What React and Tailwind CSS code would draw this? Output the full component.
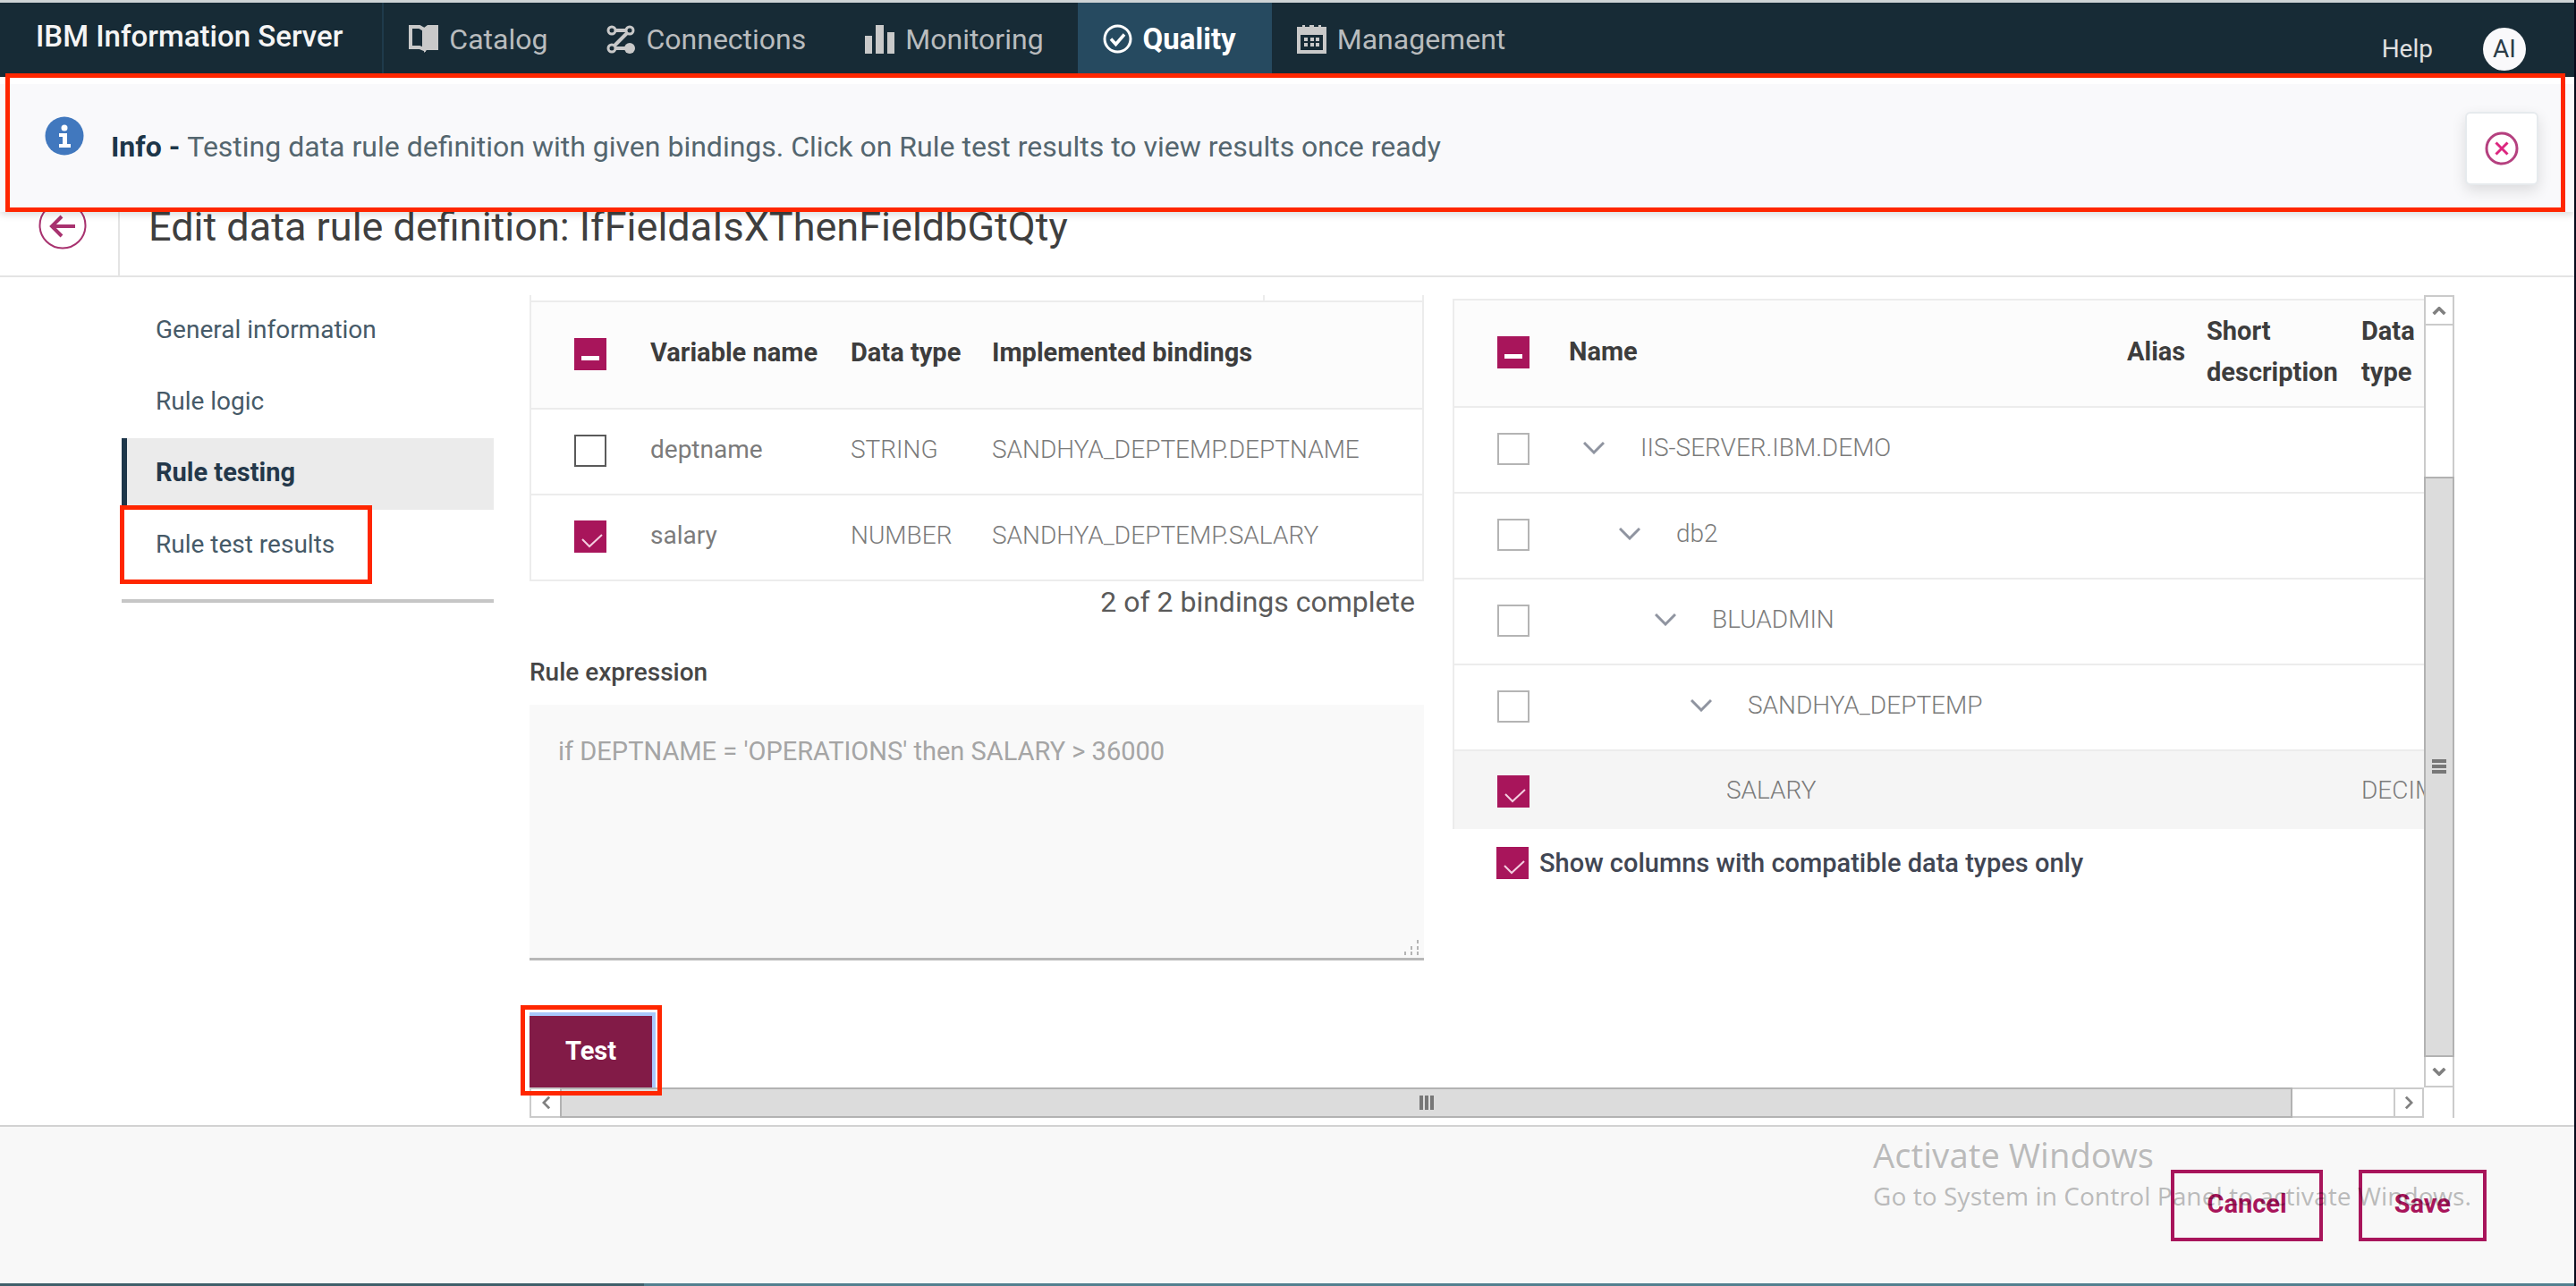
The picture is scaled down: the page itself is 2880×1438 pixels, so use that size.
import React from "react";

function CatalogIcon() {
  return (
    <svg viewBox="0 0 33 31" className="h-[31px] w-[33px]" fill="none" aria-hidden="true">
      <path d="M2 2h10l5 3v22l-5-2H2z" stroke="#c9c9c9" strokeWidth="4" />
      <path d="M17 3l4-3h12v28H20l-3 3z" fill="#c9c9c9" />
    </svg>
  );
}

function ConnectionsIcon() {
  return (
    <svg viewBox="0 0 32 32" className="h-8 w-8" fill="none" stroke="#c9c9c9" aria-hidden="true">
      <circle cx="6" cy="6" r="4" strokeWidth="3" />
      <circle cx="26" cy="6" r="4" strokeWidth="3" />
      <circle cx="6" cy="26" r="4" strokeWidth="3" />
      <circle cx="26" cy="26" r="6" fill="#c9c9c9" stroke="none" />
      <path d="M10 6h12M23 9L9 23M10 26h12" strokeWidth="4" />
    </svg>
  );
}

function MonitoringIcon() {
  return (
    <svg viewBox="0 0 33 32" className="h-8 w-[33px]" fill="#c9c9c9" aria-hidden="true">
      <path d="M0 12h8v20H0zM12 0h9v32h-9zM25 8h8v24h-8z" />
    </svg>
  );
}

function QualityIcon() {
  return (
    <svg viewBox="0 0 33 33" className="h-[33px] w-[33px]" fill="none" stroke="#ffffff" aria-hidden="true">
      <circle cx="16.500" cy="16.500" r="14.500" strokeWidth="3" />
      <path d="M9 16.500l5.500 6L24 11.500" strokeWidth="3.500" />
    </svg>
  );
}

function ManagementIcon() {
  return (
    <svg viewBox="0 0 33 32" className="h-8 w-[33px]" aria-hidden="true">
      <path
        fill="#c9c9c9"
        fillRule="evenodd"
        d="M0 2h6V0h3v2h5V0h5v2h5V0h3v2h6v30H0zM4 11v17h25V11z"
      />
      <path
        fill="#c9c9c9"
        d="M8 14h4v4H8zM15 14h4v4h-4zM21 14h4v4h-4zM8 20h4v4H8zM15 20h4v4h-4zM21 20h4v4h-4z"
      />
    </svg>
  );
}

function InfoIcon() {
  return (
    <svg viewBox="0 0 44 44" className="h-11 w-11 shrink-0" aria-hidden="true">
      <circle cx="22" cy="22" r="21.500" fill="#4178be" />
      <circle cx="22" cy="13" r="3.500" fill="#ffffff" />
      <path d="M16 19h9v12h4v4H16v-4h4v-8h-4z" fill="#ffffff" />
    </svg>
  );
}

function Chevron({ className, d, box = "0 0 24 14" }) {
  return (
    <svg viewBox={box} className={className} fill="none" stroke="currentColor" aria-hidden="true">
      <path d={d} />
    </svg>
  );
}

function Checkbox({ id, label, state = "off", tone = "light" }) {
  const on = state !== "off";
  return (
    <span className="relative block h-9 w-9 shrink-0">
      <input
        type="checkbox"
        id={id}
        aria-label={label}
        defaultChecked={on}
        className={
          on
            ? "block h-9 w-9 appearance-none bg-[#a8155b]"
            : tone === "dark"
              ? "block h-9 w-9 appearance-none border-2 border-[#5a5a5a] bg-white"
              : "block h-9 w-9 appearance-none border-2 border-[#b4b4b4] bg-white"
        }
      />
      {on && (
        <svg viewBox="0 0 36 36" className="pointer-events-none absolute inset-0" fill="none" aria-hidden="true">
          {state === "mixed" ? (
            <path d="M8 22.500h20" stroke="#ffffff" strokeWidth="5" />
          ) : (
            <path d="M9 21l8 8 14-13" stroke="#f3cfe0" strokeWidth="2" />
          )}
        </svg>
      )}
    </span>
  );
}

const navItems = [
  { label: "Catalog", icon: <CatalogIcon /> },
  { label: "Connections", icon: <ConnectionsIcon /> },
  { label: "Monitoring", icon: <MonitoringIcon /> },
  { label: "Quality", icon: <QualityIcon />, active: true },
  { label: "Management", icon: <ManagementIcon /> },
];

function TopBar() {
  return (
    <header className="flex h-[86px] items-stretch border-t-[3px] border-[#cfd4d6] bg-[#172b36]">
      <div className="flex items-center border-r-2 border-[#1f3a4b] pr-11 pb-2 pl-10 text-[33px] font-medium text-[#f5f5f5]">
        IBM Information Server
      </div>
      <nav className="flex items-stretch">
        {navItems.map((item) => (
          <a
            key={item.label}
            href="#"
            className={
              item.active
                ? "flex items-center gap-3 bg-[#264a60] pr-10 pb-[2px] pl-7 text-[33px] font-bold text-white"
                : "flex items-center gap-3 pr-[38px] pb-[2px] pl-7 text-[32px] text-[#b9bcbe]"
            }
          >
            {item.icon}
            {item.label}
          </a>
        ))}
      </nav>
      <div className="ml-auto flex items-center gap-14 pt-5 pr-[54px]">
        <a href="#" className="text-[28px] text-[#e0e0e0]">
          Help
        </a>
        <button className="flex h-12 w-12 items-center justify-center rounded-full bg-[#f9f9fb] text-[28px] text-[#2b3c47]">
          AI
        </button>
      </div>
    </header>
  );
}

function Banner() {
  return (
    <div className="absolute inset-x-0 top-[86px] z-10 border-t-8 border-white bg-[#f9f9fb] shadow-[0_3px_8px_rgba(0,0,0,0.14)]">
      <div role="status" className="flex h-[143px] items-center pr-10 pl-[50px]">
        <div className="mb-7">
          <InfoIcon />
        </div>
        <p className="ml-[30px] pb-1 text-[32px] text-[#54666f]">
          <strong className="font-bold text-[#1d3649]">Info - </strong>
          Testing data rule definition with given bindings. Click on Rule test results to view results once ready
        </p>
        <button
          aria-label="Close notification"
          className="ml-auto flex h-[82px] w-[82px] items-center justify-center rounded-md border-2 border-[#e6eaed] bg-white shadow-[0_6px_16px_rgba(0,0,0,0.12)]"
        >
          <svg viewBox="0 0 38 38" className="h-[38px] w-[38px]" fill="none" aria-hidden="true">
            <circle cx="19" cy="19" r="17" stroke="#b5407f" strokeWidth="3" />
            <path d="M12.500 12.500l13 13M25.500 12.500l-13 13" stroke="#dc267f" strokeWidth="3" />
          </svg>
        </button>
      </div>
      <div className="pointer-events-none absolute -top-3 right-[10px] bottom-0 left-[6px] border-[5px] border-[#ff2600]" />
    </div>
  );
}

function PageTitle() {
  return (
    <div className="border-b-2 border-[#e4e4e4] pt-[110px]">
      <div className="flex h-[112px] items-stretch">
        <div className="flex w-[134px] items-center border-r-2 border-[#e4e4e4] pl-[43px]">
          <button aria-label="Back">
            <svg viewBox="0 0 54 54" className="block h-[54px] w-[54px]" fill="none" stroke="#a8326f" aria-hidden="true">
              <circle cx="27" cy="27" r="25.500" strokeWidth="2" />
              <path d="M41 28H15M26 17L15 28l11 11" strokeWidth="4" />
            </svg>
          </button>
        </div>
        <h1 className="flex items-center pt-1 pl-8 text-[45px] text-[#3f3f3f]">
          Edit data rule definition: IfFieldaIsXThenFieldbGtQty
        </h1>
      </div>
    </div>
  );
}

const sections = ["General information", "Rule logic", "Rule testing", "Rule test results"];

function SideNav() {
  return (
    <nav className="w-[416px] shrink-0">
      <ul className="border-b-4 border-[#c6c6c6] pb-5">
        {sections.map((name) => (
          <li key={name} className="relative">
            <a
              href="#"
              className={
                name === "Rule testing"
                  ? "flex h-20 items-center border-l-[6px] border-[#1d3649] bg-[#ebebeb] pb-[2px] pl-8 text-[29px] font-bold text-[#24384a]"
                  : "flex h-20 items-center border-l-[6px] border-transparent pb-[2px] pl-8 text-[28px] text-[#465a68]"
              }
            >
              {name}
            </a>
            {name === "Rule test results" && (
              <div className="pointer-events-none absolute -top-[5px] -left-[2px] h-[88px] w-[282px] border-[5px] border-[#ff2600]" />
            )}
          </li>
        ))}
      </ul>
    </nav>
  );
}

const bindings = [
  { name: "deptname", type: "STRING", target: "SANDHYA_DEPTEMP.DEPTNAME", state: "off" },
  { name: "salary", type: "NUMBER", target: "SANDHYA_DEPTEMP.SALARY", state: "on" },
];

function BindingsPanel() {
  return (
    <div>
      <div className="h-[6px] border-x-2 border-[#ececec] pr-44">
        <div className="h-full border-r-2 border-[#ececec]" />
      </div>
      <table className="w-full table-fixed border-collapse border-2 border-[#ececec] text-left">
        <colgroup>
          <col className="w-[134px]" />
          <col className="w-[224px]" />
          <col className="w-[158px]" />
          <col />
        </colgroup>
        <thead>
          <tr className="h-[120px] border-b-2 border-[#ececec] bg-[#fcfcfc] text-[29px] font-bold text-[#3d3d3d]">
            <th className="pb-[2px] pl-12">
              <Checkbox label="Select all variables" state="mixed" />
            </th>
            <th className="pb-1">Variable name</th>
            <th className="pb-1">Data type</th>
            <th className="pb-1">Implemented bindings</th>
          </tr>
        </thead>
        <tbody>
          {bindings.map((row) => (
            <tr key={row.name} className="h-24 border-b-2 border-[#ececec] text-[28px] text-[#7b7b7b]">
              <td className="pb-[2px] pl-12">
                <Checkbox label={row.name} state={row.state} tone="dark" />
              </td>
              <td className="pb-1">{row.name}</td>
              <td className="pb-1 font-light">{row.type}</td>
              <td className="pb-1 font-light">{row.target}</td>
            </tr>
          ))}
        </tbody>
      </table>
      <p className="pr-[10px] text-right text-[32px] leading-[46px] text-[#5a5a5a]">2 of 2 bindings complete</p>
      <label htmlFor="expression" className="mt-9 block text-[28px] leading-10 font-medium text-[#464646]">
        Rule expression
      </label>
      <div className="relative mt-4">
        <textarea
          id="expression"
          readOnly
          defaultValue="if DEPTNAME = 'OPERATIONS' then SALARY > 36000"
          className="block h-[286px] w-full resize-none border-b-[3px] border-[#b8b8b8] bg-[#f9f9f9] px-8 pt-8 text-[29px] leading-10 text-[#a5a5a5] outline-none"
        />
        <svg viewBox="0 0 18 18" className="absolute right-1 bottom-[5px] h-[18px] w-[18px]" fill="#b4b4b4" aria-hidden="true">
          <path d="M14 0h2v4h-2zM14 7h2v4h-2zM7 7h2v4H7zM14 13h2v4h-2zM7 13h2v4H7zM0 13h2v4H0z" />
        </svg>
      </div>
      <button className="mt-[62px] h-20 bg-[#821b47] px-10 text-[29px] font-bold text-white shadow-[0_0_0_4px_#a9c8fb]">
        Test
      </button>
    </div>
  );
}

const tree = [
  { name: "IIS-SERVER.IBM.DEMO", pad: "pl-4" },
  { name: "db2", pad: "pl-14" },
  { name: "BLUADMIN", pad: "pl-24" },
  { name: "SANDHYA_DEPTEMP", pad: "pl-[136px]" },
];

function ColumnsPanel() {
  return (
    <div className="overflow-hidden pt-1">
      <table className="w-[calc(100%+80px)] table-fixed border-collapse border-t-2 border-l-2 border-[#ececec] text-left">
        <colgroup>
          <col className="w-[129px]" />
          <col />
          <col className="w-[89px]" />
          <col className="w-[173px]" />
          <col className="w-[150px]" />
        </colgroup>
        <thead>
          <tr className="h-[120px] border-b-2 border-[#ececec] bg-[#fcfcfc] text-[29px] leading-[46px] font-bold text-[#3d3d3d]">
            <th className="pb-[2px] pl-12">
              <Checkbox label="Select all columns" state="mixed" />
            </th>
            <th className="pb-1">Name</th>
            <th className="pb-1">Alias</th>
            <th className="pb-1">Short description</th>
            <th className="pr-12 pb-1">Data type</th>
          </tr>
        </thead>
        <tbody className="text-[28px] text-[#7b7b7b]">
          {tree.map((node) => (
            <tr key={node.name} className="h-24 border-b-2 border-[#ececec]">
              <td className="pb-[2px] pl-12">
                <Checkbox label={node.name} />
              </td>
              <td className="pb-1 font-light">
                <div className={node.pad}>
                  <div className="flex items-center gap-10">
                    <button aria-label={`Collapse ${node.name}`} className="text-[#8f94a0]">
                      <Chevron className="h-[14px] w-6 stroke-[3px]" d="M1 1l11 11L23 1" />
                    </button>
                    {node.name}
                  </div>
                </div>
              </td>
              <td />
              <td />
              <td />
            </tr>
          ))}
          <tr className="h-[88px] bg-[#f5f5f5]">
            <td className="pt-[2px] pl-12">
              <Checkbox label="SALARY" state="on" />
            </td>
            <td className="pl-44 font-light">SALARY</td>
            <td />
            <td />
            <td className="font-light">DECIMAL</td>
          </tr>
        </tbody>
      </table>
      <div className="mt-5 flex items-center gap-3 pl-[49px]">
        <Checkbox id="compatible" state="on" />
        <label htmlFor="compatible" className="text-[29px] leading-9 font-medium text-[#414653]">
          Show columns with compatible data types only
        </label>
      </div>
    </div>
  );
}

function VerticalScrollbar() {
  return (
    <div className="flex flex-col border-2 border-b-0 border-[#cbcbcb] text-[#808080]">
      <button aria-label="Scroll up" className="flex h-8 items-center justify-center border-b-2 border-[#cbcbcb]">
        <Chevron className="h-[9px] w-4 stroke-[4px]" box="0 0 16 10" d="M1 9l7-7 7 7" />
      </button>
      <div className="grow-[174]" />
      <div className="-mx-[2px] flex grow-[650] flex-col items-center justify-center gap-[2px] border-2 border-[#b2b2b2] bg-[#dcdcdc]">
        <span className="h-1 w-4 bg-[#777777]" />
        <span className="h-1 w-4 bg-[#777777]" />
        <span className="h-1 w-4 bg-[#777777]" />
      </div>
      <button aria-label="Scroll down" className="flex h-[34px] items-center justify-center border-b-2 border-[#cbcbcb]">
        <Chevron className="h-[9px] w-4 stroke-[4px]" box="0 0 16 10" d="M1 1l7 7 7-7" />
      </button>
    </div>
  );
}

function HorizontalScrollbar() {
  return (
    <div className="flex border-2 border-[#cbcbcb] text-[#808080]">
      <button aria-label="Scroll left" className="flex w-8 items-center justify-center">
        <Chevron className="h-4 w-[9px] stroke-[3px]" box="0 0 10 16" d="M9 1L2 8l7 7" />
      </button>
      <div className="-my-[2px] flex grow-[1937] items-center justify-center gap-[2px] border-2 border-[#b2b2b2] bg-[#dcdcdc]">
        <span className="h-4 w-1 bg-[#777777]" />
        <span className="h-4 w-1 bg-[#777777]" />
        <span className="h-4 w-1 bg-[#777777]" />
      </div>
      <div className="grow-[114]" />
      <button aria-label="Scroll right" className="flex w-8 items-center justify-center border-l-2 border-[#cbcbcb]">
        <Chevron className="h-4 w-[9px] stroke-[3px]" box="0 0 10 16" d="M1 1l7 7-7 7" />
      </button>
    </div>
  );
}

function Workspace() {
  return (
    <div className="relative grid min-w-0 flex-1 grid-cols-[minmax(0,1fr)_34px] grid-rows-[minmax(0,1fr)_34px]">
      <div className="grid grid-cols-[minmax(0,1000fr)_minmax(0,1086fr)] gap-8 overflow-hidden">
        <BindingsPanel />
        <ColumnsPanel />
      </div>
      <VerticalScrollbar />
      <HorizontalScrollbar />
      <div className="border-r-2 border-[#cbcbcb]" />
      <div className="pointer-events-none absolute bottom-[25px] -left-[10px] h-[101px] w-[158px] border-[5px] border-[#ff2600]" />
    </div>
  );
}

function Footer() {
  return (
    <footer className="relative border-t-2 border-[#d2d2d2] bg-[#f8f8f8]">
      <div className="flex h-[175px] items-start justify-end gap-10 pt-12 pr-[98px] text-[29px] font-bold text-[#a8155b]">
        <button className="h-20 border-4 border-[#a8155b] px-9 pb-[2px]">Cancel</button>
        <button className="h-20 border-4 border-[#a8155b] px-9 pb-[2px]">Save</button>
      </div>
      <div className="pointer-events-none absolute top-2 right-[115px] font-['Noto_Sans',sans-serif] leading-[46px] text-black/25">
        <div className="text-[38px]">Activate Windows</div>
        <div className="text-[28px]">Go to System in Control Panel to activate Windows.</div>
      </div>
      <div className="flex h-[3px] bg-[#52808f]">
        <div className="w-1/4 bg-[#3f5f6a]" />
      </div>
    </footer>
  );
}

export default function App() {
  return (
    <div className="relative flex min-h-screen flex-col border-r-2 border-[#06091a] bg-white font-[Roboto,sans-serif]">
      <TopBar />
      <Banner />
      <PageTitle />
      <main className="flex flex-1 gap-10 pt-5 pr-[134px] pb-2 pl-[136px]">
        <SideNav />
        <Workspace />
      </main>
      <Footer />
    </div>
  );
}
